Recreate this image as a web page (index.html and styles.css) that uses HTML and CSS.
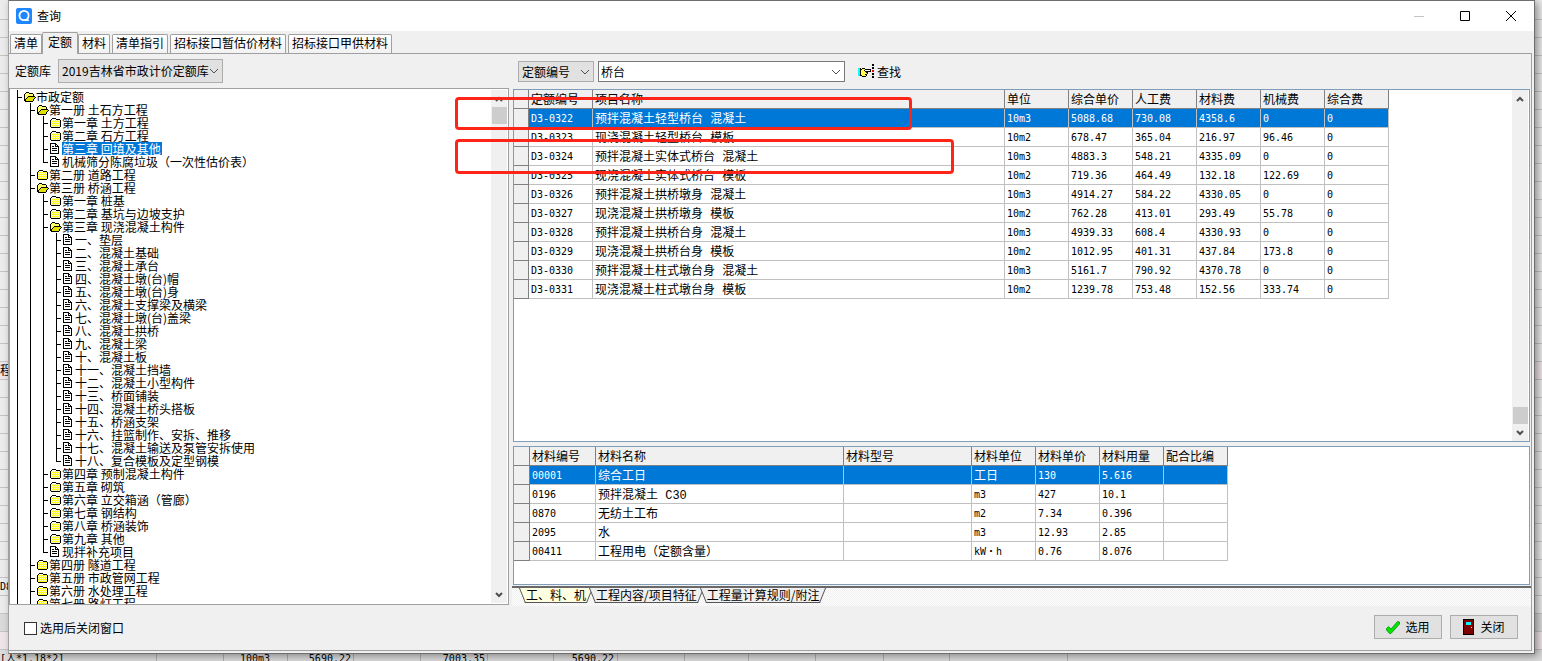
FILE: index.html
```html
<!DOCTYPE html>
<html lang="zh-CN">
<head>
<meta charset="utf-8">
<title>查询</title>
<link rel="stylesheet" href="styles.css">
</head>
<body>
<svg class="defs" width="0" height="0" aria-hidden="true">
  <defs>
    <pattern id="dots" width="2" height="2" patternUnits="userSpaceOnUse"><path fill="#ffffc8" d="M0 0h2v2H0z"/><path fill="#ffff00" d="M0 0h1v1H0zM1 1h1v1H1z"/></pattern>
    <symbol id="closed" viewBox="0 0 12 12"><path fill="url(#dots)" d="M1 3h9v7H1z"/><path d="M2 1h4v1H2zM1 2h1v1H1zM6 2h4v1H6zM0 3h1v7H0zM10 3h1v7h-1zM1 10h9v1H1z"/></symbol>
    <symbol id="open" viewBox="0 0 12 12"><path fill="#ffff66" d="M1 2h5v1h3v3H4l-3 3z"/><path fill="#e0e000" d="M4 6h7v1h-1v1H9v2H1V8h1V7h2z"/><path d="M2 1h3v1H2zM1 2h1v1H1zM5 2h4v1H5zM0 3h1v7H0zM9 3h1v2H9zM4 5h7v1H4zM3 6h1v1H3zM2 7h1v1H2zM1 8h1v2H1zM11 6h1v1h-1zM10 7h1v1h-1zM9 8h1v2H9zM1 10h8v1H1z"/></symbol>
    <symbol id="doc" viewBox="0 0 12 12"><path fill="#fff" d="M1 1h5l2 2v7H1z"/><path d="M0 0h6v1H0zM0 1h1v10H0zM6 1h1v1H6zM7 2h1v1H7zM5 1h1v3H5zM5 3h3v1H5zM8 3h1v8H8zM1 10h7v1H1zM2 3h2v1H2zM2 5h5v1H2zM2 7h5v1H2z"/></symbol>
    <symbol id="down" viewBox="0 0 10 6"><path d="M1 1l4 4 4-4" fill="none" stroke="#505050"/></symbol>
    <symbol id="arrow" viewBox="0 0 8 6"><path d="M1 1l3 3 3-3" fill="none" stroke="#505050" stroke-width="2"/></symbol>
  </defs>
</svg>

<div class="sheet">
  <div class="sheet-row pink r21">程</div>
  <div class="sheet-row r33">D8</div>
  <div class="sheet-row grey r35"></div>
  <div class="sheet-row pink r36"></div>
  <div class="sheet-row cells r37">
    <span>[人*1.18*2]</span><span></span><span class="num">100m3</span><span class="num">5690.22</span><span></span><span class="num">7003.35</span><span></span><span class="num">5690.22</span><span></span><span></span><span></span><span></span><span></span><span></span>
  </div>
</div>

<main class="window">
  <header class="titlebar">
    <svg class="logo" width="16" height="16" viewBox="0 0 16 16"><rect width="16" height="16" rx="2" fill="#1e86ff"/><circle cx="8" cy="7.5" r="4.6" fill="none" stroke="#fff" stroke-width="1.8"/><path d="M9 12.2h4" stroke="#fff" stroke-width="1.4"/></svg>
    <h1>查询</h1>
    <button class="winbtn" aria-label="最小化"><svg width="10" height="10"><path d="M0 5.500h10" stroke="#c4c4c4"/></svg></button>
    <button class="winbtn" aria-label="最大化"><svg width="10" height="10"><path d="M.5.500h9v9h-9z" fill="none" stroke="#000"/></svg></button>
    <button class="winbtn" aria-label="关闭窗口"><svg width="10" height="10"><path d="M0 0l10 10M10 0L0 10" stroke="#000"/></svg></button>
  </header>

  <nav class="tabs">
    <button>清单</button><button class="selected">定额</button><button>材料</button><button>清单指引</button><button>招标接口暂估价材料</button><button>招标接口甲供材料</button>
  </nav>

  <section class="page">
    <div class="columns">
      <div class="left">
        <div class="toolbar">
          <label for="lib">定额库</label>
          <span class="combo lib"><select id="lib"><option>2019吉林省市政计价定额库</option></select><svg width="10" height="6"><use href="#down"/></svg></span>
        </div>
        <div class="treebox">
          <ul class="tree">
            <li><p><svg><use href="#open"/></svg>市政定额</p>
              <ul>
                <li><p><svg><use href="#open"/></svg>第一册 土石方工程</p>
                  <ul>
                    <li><p><svg><use href="#closed"/></svg>第一章 土方工程</p></li>
                    <li><p><svg><use href="#closed"/></svg>第二章 石方工程</p></li>
                    <li><p><svg><use href="#doc"/></svg><mark>第三章 回填及其他</mark></p></li>
                    <li><p><svg><use href="#doc"/></svg>机械筛分陈腐垃圾（一次性估价表）</p></li>
                  </ul>
                </li>
                <li><p><svg><use href="#closed"/></svg>第二册 道路工程</p></li>
                <li><p><svg><use href="#open"/></svg>第三册 桥涵工程</p>
                  <ul>
                    <li><p><svg><use href="#closed"/></svg>第一章 桩基</p></li>
                    <li><p><svg><use href="#closed"/></svg>第二章 基坑与边坡支护</p></li>
                    <li><p><svg><use href="#open"/></svg>第三章 现浇混凝土构件</p>
                      <ul>
                        <li><p><svg><use href="#doc"/></svg>一、垫层</p></li>
                        <li><p><svg><use href="#doc"/></svg>二、混凝土基础</p></li>
                        <li><p><svg><use href="#doc"/></svg>三、混凝土承台</p></li>
                        <li><p><svg><use href="#doc"/></svg>四、混凝土墩(台)帽</p></li>
                        <li><p><svg><use href="#doc"/></svg>五、混凝土墩(台)身</p></li>
                        <li><p><svg><use href="#doc"/></svg>六、混凝土支撑梁及横梁</p></li>
                        <li><p><svg><use href="#doc"/></svg>七、混凝土墩(台)盖梁</p></li>
                        <li><p><svg><use href="#doc"/></svg>八、混凝土拱桥</p></li>
                        <li><p><svg><use href="#doc"/></svg>九、混凝土梁</p></li>
                        <li><p><svg><use href="#doc"/></svg>十、混凝土板</p></li>
                        <li><p><svg><use href="#doc"/></svg>十一、混凝土挡墙</p></li>
                        <li><p><svg><use href="#doc"/></svg>十二、混凝土小型构件</p></li>
                        <li><p><svg><use href="#doc"/></svg>十三、桥面铺装</p></li>
                        <li><p><svg><use href="#doc"/></svg>十四、混凝土桥头搭板</p></li>
                        <li><p><svg><use href="#doc"/></svg>十五、桥涵支架</p></li>
                        <li><p><svg><use href="#doc"/></svg>十六、挂篮制作、安拆、推移</p></li>
                        <li><p><svg><use href="#doc"/></svg>十七、混凝土输送及泵管安拆使用</p></li>
                        <li><p><svg><use href="#doc"/></svg>十八、复合模板及定型钢模</p></li>
                      </ul>
                    </li>
                    <li><p><svg><use href="#closed"/></svg>第四章 预制混凝土构件</p></li>
                    <li><p><svg><use href="#closed"/></svg>第五章 砌筑</p></li>
                    <li><p><svg><use href="#closed"/></svg>第六章 立交箱涵（管廊）</p></li>
                    <li><p><svg><use href="#closed"/></svg>第七章 钢结构</p></li>
                    <li><p><svg><use href="#closed"/></svg>第八章 桥涵装饰</p></li>
                    <li><p><svg><use href="#closed"/></svg>第九章 其他</p></li>
                    <li><p><svg><use href="#doc"/></svg>现拌补充项目</p></li>
                  </ul>
                </li>
                <li><p><svg><use href="#closed"/></svg>第四册 隧道工程</p></li>
                <li><p><svg><use href="#closed"/></svg>第五册 市政管网工程</p></li>
                <li><p><svg><use href="#closed"/></svg>第六册 水处理工程</p></li>
                <li><p><svg><use href="#closed"/></svg>第七册 路灯工程</p></li>
                <li></li>
              </ul>
            </li>
            <li></li>
          </ul>
          <div class="scroll"><svg class="up" width="8" height="6"><use href="#arrow"/></svg><i class="thumb"></i><b></b><svg width="8" height="6"><use href="#arrow"/></svg></div>
        </div>
      </div>

      <div class="right">
        <div class="toolbar">
          <span class="combo field"><select aria-label="查找字段"><option>定额编号</option></select><svg width="10" height="6"><use href="#down"/></svg></span>
          <span class="combo query"><input type="text" aria-label="查找内容" value="桥台"><svg width="10" height="6"><use href="#down"/></svg></span>
          <button class="find"><svg width="17" height="15" viewBox="0 0 17 15" shape-rendering="crispEdges"><path fill="#00ffff" d="M0 4h2v8H0z"/><path fill="#ffff50" d="M3 5h4v2h2v5H4L2 10V6z"/><path fill="#fff" d="M7 6h6v1H7z"/><path d="M2 4h1v8H2zM3 5h1v1H3zM4 4h3v1H4zM7 5h6v1H7zM12 6h1v1h-1zM7 7h6v1H7zM6 6h1v1H6zM8 8h2v1H8zM9 9h1v1H9zM7 10h2v1H7zM8 11h1v1H8zM4 12h4v1H4zM3 11h1v1H3z"/><path d="M14 0h2v2h-2zM14 3h2v2h-2zM14 9h2v2h-2zM14 12h2v2h-2z"/><path fill="#e00" d="M14 6h2v2h-2z"/></svg>查找</button>
        </div>
        <div class="gridbox main">
          <table>
            <colgroup><col class="w15"><col class="w64"><col class="w412"><col class="w64"><col class="w64"><col class="w64"><col class="w64"><col class="w64"><col class="w64"></colgroup>
            <thead><tr><th></th><th>定额编号</th><th>项目名称</th><th>单位</th><th>综合单价</th><th>人工费</th><th>材料费</th><th>机械费</th><th>综合费</th></tr></thead>
            <tbody>
              <tr class="current"><th></th><td>D3-0322</td><td class="name">预拌混凝土轻型桥台 混凝土</td><td>10m3</td><td>5088.68</td><td>730.08</td><td>4358.6</td><td>0</td><td>0</td></tr>
              <tr><th></th><td>D3-0323</td><td class="name">现浇混凝土轻型桥台 模板</td><td>10m2</td><td>678.47</td><td>365.04</td><td>216.97</td><td>96.46</td><td>0</td></tr>
              <tr><th></th><td>D3-0324</td><td class="name">预拌混凝土实体式桥台 混凝土</td><td>10m3</td><td>4883.3</td><td>548.21</td><td>4335.09</td><td>0</td><td>0</td></tr>
              <tr><th></th><td>D3-0325</td><td class="name">现浇混凝土实体式桥台 模板</td><td>10m2</td><td>719.36</td><td>464.49</td><td>132.18</td><td>122.69</td><td>0</td></tr>
              <tr><th></th><td>D3-0326</td><td class="name">预拌混凝土拱桥墩身 混凝土</td><td>10m3</td><td>4914.27</td><td>584.22</td><td>4330.05</td><td>0</td><td>0</td></tr>
              <tr><th></th><td>D3-0327</td><td class="name">现浇混凝土拱桥墩身 模板</td><td>10m2</td><td>762.28</td><td>413.01</td><td>293.49</td><td>55.78</td><td>0</td></tr>
              <tr><th></th><td>D3-0328</td><td class="name">预拌混凝土拱桥台身 混凝土</td><td>10m3</td><td>4939.33</td><td>608.4</td><td>4330.93</td><td>0</td><td>0</td></tr>
              <tr><th></th><td>D3-0329</td><td class="name">现浇混凝土拱桥台身 模板</td><td>10m2</td><td>1012.95</td><td>401.31</td><td>437.84</td><td>173.8</td><td>0</td></tr>
              <tr><th></th><td>D3-0330</td><td class="name">预拌混凝土柱式墩台身 混凝土</td><td>10m3</td><td>5161.7</td><td>790.92</td><td>4370.78</td><td>0</td><td>0</td></tr>
              <tr><th></th><td>D3-0331</td><td class="name">现浇混凝土柱式墩台身 模板</td><td>10m2</td><td>1239.78</td><td>753.48</td><td>152.56</td><td>333.74</td><td>0</td></tr>
            </tbody>
          </table>
          <div class="scroll low"><svg class="up" width="8" height="6"><use href="#arrow"/></svg><b></b><i class="thumb"></i><svg width="8" height="6"><use href="#arrow"/></svg></div>
        </div>
        <div class="gridbox detail">
          <table>
            <colgroup><col class="w16"><col class="w66"><col class="w248"><col class="w128"><col class="w64"><col class="w64"><col class="w64"><col class="w64"></colgroup>
            <thead><tr><th></th><th>材料编号</th><th>材料名称</th><th>材料型号</th><th>材料单位</th><th>材料单价</th><th>材料用量</th><th>配合比编</th></tr></thead>
            <tbody>
              <tr class="current"><th></th><td>00001</td><td class="name">综合工日</td><td></td><td class="name">工日</td><td>130</td><td>5.616</td><td></td></tr>
              <tr><th></th><td>0196</td><td class="name">预拌混凝土 C30</td><td></td><td>m3</td><td>427</td><td>10.1</td><td></td></tr>
              <tr><th></th><td>0870</td><td class="name">无纺土工布</td><td></td><td>m2</td><td>7.34</td><td>0.396</td><td></td></tr>
              <tr><th></th><td>2095</td><td class="name">水</td><td></td><td>m3</td><td>12.93</td><td>2.85</td><td></td></tr>
              <tr><th></th><td>00411</td><td class="name">工程用电（定额含量）</td><td></td><td>kW・h</td><td>0.76</td><td>8.076</td><td></td></tr>
            </tbody>
          </table>
        </div>
        <div class="foottabs"><button class="on">工、料、机</button><button>工程内容/项目特征</button><button>工程量计算规则/附注</button></div>
      </div>
    </div>

    <footer>
      <input type="checkbox" id="closeAfter"><label for="closeAfter">选用后关闭窗口</label>
      <button class="cmd"><svg width="14" height="13" viewBox="0 0 14 13"><path d="M.5 7.500L2.500 5.500l2.500 2.500L11.500.500l2 .5v2L5 12.500H3.500L.5 9z" fill="#00e800" stroke="#0a8a0a" stroke-width=".8"/></svg>选用</button>
      <button class="cmd"><svg width="12" height="16" viewBox="0 0 12 16" shape-rendering="crispEdges"><path d="M0 0h11v16H0z"/><path fill="#800000" d="M1 1h9v14H1z"/><path fill="#00ffff" d="M3 3h5v3H3z"/><path fill="#ff0" d="M8 8h1v1H8z"/></svg>关闭</button>
    </footer>
  </section>

  <div class="mark first"></div>
  <div class="mark second"></div>
</main>
</body>
</html>
```

FILE: styles.css
```css
* { box-sizing: border-box; }
html, body { height: 100%; }
body {
  margin: 0;
  position: relative;
  overflow: hidden;
  background: #e8e8e8;
  color: #000;
  font: 12px/18px "Noto Sans CJK SC", sans-serif;
}
button, input, select { font: inherit; color: inherit; margin: 0; padding: 0; border: 0; background: none; border-radius: 0; }
svg { display: block; flex: none; }
.defs { position: absolute; }

/* spreadsheet behind the dialog */
.sheet {
  height: 100%;
  overflow: hidden;
  padding-top: 2px;
  display: grid;
  grid-template-columns: 100%;
  grid-template-rows: repeat(37, 18px);
  background: repeating-linear-gradient(#ececec 0 17px, #c4c4c4 17px 18px) 0 2px;
}
.sheet-row { border-bottom: 1px solid #c4c4c4; white-space: nowrap; font-family: "DejaVu Sans Mono", "Noto Sans CJK SC", monospace; font-size: 10px; }
.r21 { grid-row: 21; font-size: 12px; }
.r33 { grid-row: 33; }
.r35 { grid-row: 35; }
.r36 { grid-row: 36; }
.r37 { grid-row: 37; }
.pink { background: #f0e6ea; }
.grey { background: #dadada; }
.cells { display: grid; grid-template-columns: 157px 67px 64px 66px 67px 67px 66px 64px 67px 64px 67px 68px 66px 118px 1fr; background: #dcdcdc; }
.cells span { border-right: 1px solid #b0b0b0; }
.cells .num { text-align: right; padding-right: 2px; }
.cells .num:nth-child(3) { padding-right: 17px; }
.cells .num:nth-child(8) { padding-right: 3px; }

.window {
  position: absolute;
  top: 0;
  right: 7px;
  bottom: 7px;
  left: 8px;
  display: flex;
  flex-direction: column;
  background: #f0f0f0;
  border: 1px solid #6e6e6e;
  border-left-color: #a0a0a0;
  box-shadow: 3px 2px 8px rgba(0, 0, 0, .4);
}
.titlebar { display: flex; align-items: center; height: 30px; background: #fff; padding-left: 7px; }
.titlebar h1 { flex: 1; margin: 0 0 0 5px; font-size: 12px; font-weight: 400; }
.winbtn { width: 46px; height: 28px; display: grid; place-items: center; }

.tabs { display: flex; align-items: flex-end; gap: 2px; height: 22px; padding-left: 1px; }
.tabs button {
  height: 19px;
  padding: 0 3px 2px;
  border: 1px solid #a0a0a0;
  border-bottom: 0;
  border-radius: 2px 2px 0 0;
  background: linear-gradient(#fff, #f2f2f2);
  line-height: 16px;
}
.tabs .selected { height: 22px; padding: 0 5px 3px; margin: 0 -2px -1px; background: #f0f0f0; position: relative; line-height: 18px; }

.page { flex: 1; min-height: 0; display: flex; flex-direction: column; margin: 0 2px 2px 0; border: 1px solid #a0a0a0; border-left: 0; }
.columns { flex: 1; min-height: 0; display: flex; }
.left { flex: 0 0 500px; display: flex; flex-direction: column; min-height: 0; padding-bottom: 1px; }
.right { flex: 1; min-width: 0; display: flex; flex-direction: column; margin-left: 3px; }
.toolbar { display: flex; align-items: center; height: 34px; padding-left: 6px; gap: 7px; }
.right .toolbar { height: 35px; gap: 4px; }

.combo { display: grid; align-items: center; height: 24px; background: #e1e1e1; border: 1px solid #adadad; }
.combo > * { grid-area: 1 / 1; }
.combo select { appearance: none; width: 100%; height: 100%; padding-left: 3px; }
.combo svg { justify-self: end; margin-right: 3px; pointer-events: none; }
.lib { width: 165px; }
.field { width: 76px; height: 21px; }
.query { width: 247px; height: 21px; background: #fff; border-color: #7a7a7a; }
.query input { width: 100%; height: 100%; padding-left: 2px; outline: 0; }
.find { display: flex; align-items: center; gap: 2px; margin-left: 9px; }

.treebox { flex: 1; min-height: 0; display: flex; overflow: hidden; background: #fff; border: 1px solid #a0a0a0; padding: 1px; }
.treebox .scroll { height: 100%; }
.tree { flex: 1; padding: 0 0 0 6px; }
.tree, .tree ul { list-style: none; margin: 0; }
.tree ul { padding: 0 0 0 13px; }
.tree li {
  min-height: 13px;
  background:
    linear-gradient(#000, #000) 0 0 / 1px 100% no-repeat,
    linear-gradient(#000, #000) 0 7px / 5px 1px no-repeat;
}
.tree li:last-child { background-size: 1px 8px, 5px 1px; }
.tree p { display: flex; align-items: center; height: 13px; margin: 0; padding-left: 7px; line-height: 13px; white-space: nowrap; }
.tree svg { width: 12px; height: 12px; shape-rendering: crispEdges; }
.tree mark { background: #0078d7; color: #fff; padding-right: 1px; line-height: 13px; height: 13px; }

.scroll { flex: none; width: 16px; display: flex; flex-direction: column; align-items: center; background: #f0f0f0; padding: 6px 0 5px; }
.scroll b { flex: 1; }
.scroll .up { transform: rotate(180deg); }
.thumb { width: 15px; height: 17px; margin-top: 5px; background: #cdcdcd; }
.low .thumb { margin: 0 0 6px; }

.gridbox { display: flex; justify-content: space-between; align-items: stretch; background: #fff; border: 1px solid #7f9db9; margin: 0 1px; overflow: hidden; min-height: 0; }
.main { flex: 1; padding-right: 1px; }
.detail { flex: 0 0 139px; margin-top: 4px; }
table { table-layout: fixed; border-collapse: separate; border-spacing: 0; width: 0; align-self: flex-start; }
th, td { height: 19px; padding: 0 2px; text-align: left; font-weight: 400; line-height: 18px; white-space: nowrap; overflow: hidden; }
th { background: #f0f0f0; border: solid #808080; border-width: 0 1px 1px 0; }
td { border: solid #c0c0c0; border-width: 0 1px 1px 0; padding-top: 2px; line-height: 16px; vertical-align: top; font-family: "DejaVu Sans Mono", "Noto Sans CJK SC", monospace; font-size: 10px; }
td.name { font-family: "Liberation Mono", "Noto Sans CJK SC", monospace; font-size: 12px; padding-top: 4px; line-height: 14px; }
.current td { background: #0078d7; color: #fff; }
.w15 { width: 15px; }
.w16 { width: 16px; }
.w64 { width: 64px; }
.w66 { width: 66px; }
.w128 { width: 128px; }
.w248 { width: 248px; }
.w412 { width: 412px; }

.foottabs {
  display: flex;
  gap: 2px;
  height: 20px;
  margin-top: 1px;
  padding-left: 10px;
  border-top: 2px solid #696969;
  background: repeating-conic-gradient(#fff 0 25%, #efefef 0 50%) 0 0 / 2px 2px;
}
.foottabs button { position: relative; z-index: 0; height: 15px; padding: 0 4px 2px; line-height: 13px; }
.foottabs button::before, .foottabs button::after {
  content: "";
  position: absolute;
  z-index: -1;
  inset: 0 50% 0 0;
  background: #f0f0f0;
  border: solid #555;
  border-width: 0 0 1px 1px;
  transform: skewX(22deg);
}
.foottabs button::after { inset: 0 0 0 45%; border-width: 0 1px 1px 0; transform: skewX(-22deg); }
.foottabs .on::before, .foottabs .on::after { background: #ffffe1; }

footer { display: flex; align-items: center; gap: 8px; height: 44px; padding: 0 13px 0 15px; }
footer input { appearance: none; width: 13px; height: 13px; border: 1px solid #333; background: #fff; }
footer label { flex: 1; margin-left: -5px; }
.cmd { display: flex; align-items: center; justify-content: center; gap: 5px; width: 68px; height: 24px; margin-bottom: 2px; background: #e1e1e1; border: 1px solid #adadad; }

/* red callouts laid over the tree and the grid */
.mark { position: absolute; left: 446px; border: 3px solid #ff2418; border-radius: 4px; pointer-events: none; }
.first { top: 96px; width: 457px; height: 33px; }
.second { top: 138px; width: 499px; height: 35px; }
```
